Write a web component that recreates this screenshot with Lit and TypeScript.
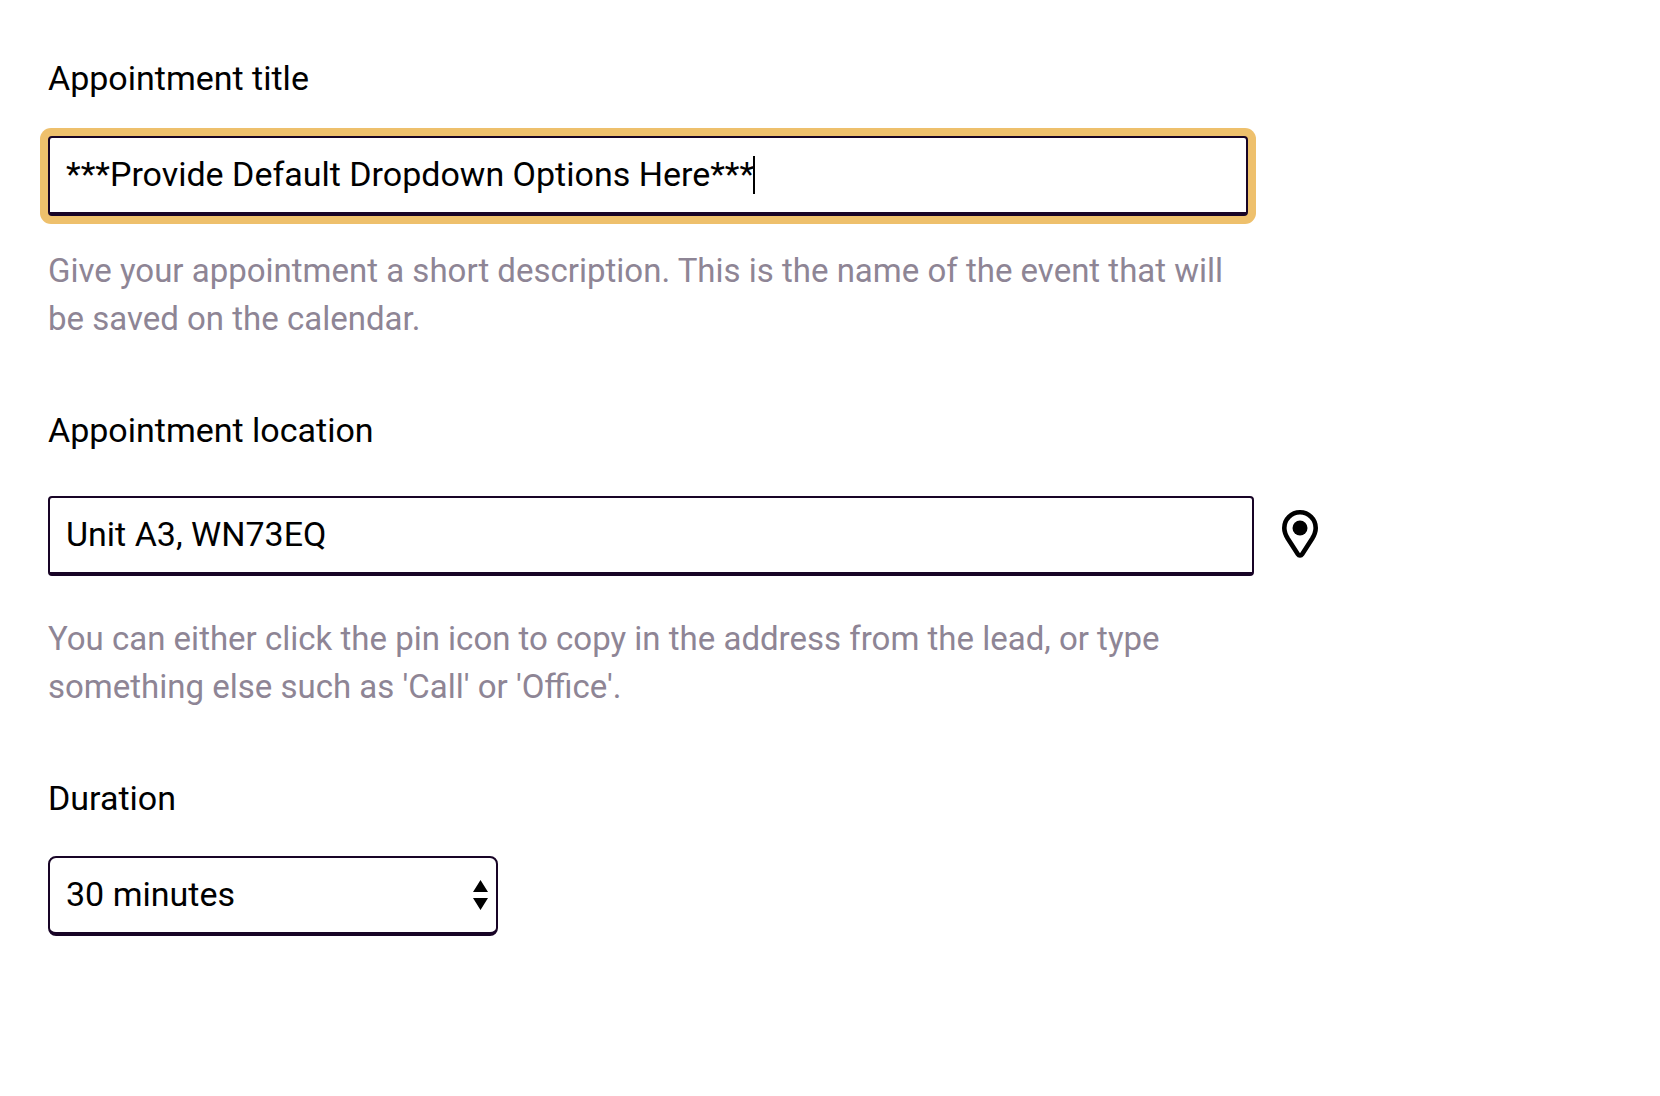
import { LitElement, html, css } from "lit";
import { customElement, state } from "lit/decorators.js";

@customElement("app-root")
export class AppRoot extends LitElement {
  static styles = css`
    :host {
      display: block;
      min-height: 100vh;
      box-sizing: border-box;
      padding: 54px 48px 48px;
      background: #fff;
      color: #000;
      font-family: Roboto, "Liberation Sans", sans-serif;
      font-size: 34px;
      line-height: 48px;
    }
    .form {
      display: flex;
      flex-direction: column;
      gap: 63px;
    }
    .field {
      display: flex;
      flex-direction: column;
      max-width: 1200px;
    }
    .label {
      margin-bottom: 34px;
    }
    .control {
      position: relative;
      display: flex;
    }
    .with-action {
      display: grid;
      grid-template-columns: minmax(0, 1fr) auto;
      align-items: center;
      column-gap: 24px;
      padding: 8px 0;
      margin-right: -74px;
    }
    .box {
      box-sizing: border-box;
      width: 100%;
      min-width: 0;
      margin: 0;
      padding: 12px 16px 14px;
      border: 2px solid #180426;
      border-bottom-width: 4px;
      border-radius: 4px;
      outline: none;
      background: #fff;
      color: #000;
      font: inherit;
    }
    .focused {
      box-shadow: 0 0 0 8px #eec06c;
    }
    .caret {
      position: absolute;
      top: 20px;
      left: 705px;
      width: 2px;
      height: 38px;
      background: #000;
    }
    .help {
      margin: 31px 0 0;
      color: #8e8595;
      font-size: 33px;
    }
    .pin {
      display: flex;
      padding: 0 4px 4px;
      border: 0;
      background: none;
      color: #000;
      cursor: pointer;
    }
    .pin svg {
      width: 36px;
      height: 48px;
    }
    .duration {
      width: 450px;
      max-width: 100%;
    }
    .select {
      appearance: none;
      padding-right: 40px;
      border-radius: 8px;
    }
    .arrows {
      position: absolute;
      top: 24px;
      right: 10px;
      width: 15px;
      height: 30px;
      pointer-events: none;
    }
  `;

  @state() private heading = "***Provide Default Dropdown Options Here***";
  @state() private place = "Unit A3, WN73EQ";

  render() {
    return html`
      <form class="form">
        <div class="field">
          <label class="label" for="title">Appointment title</label>
          <div class="control">
            <input class="box focused" id="title" type="text" aria-describedby="title-help" .value=${this.heading} />
            <span class="caret"></span>
          </div>
          <p class="help" id="title-help">
            Give your appointment a short description. This is the name of the event that will be saved on the calendar.
          </p>
        </div>
        <div class="field">
          <label class="label" id="place-label" for="place">Appointment location</label>
          <div class="with-action">
            <input class="box" id="place" type="text" aria-describedby="place-help" .value=${this.place} />
            <button class="pin" type="button" aria-labelledby="place-label">
              <svg viewBox="0 0 36 48" aria-hidden="true">
                <path
                  d="M18 2.300C9.300 2.300 2.300 9.300 2.300 18c0 3.800 1.400 7.200 3.600 10.800L15.900 44.300c1 1.600 3.200 1.600 4.200 0L30.100 28.800C32.300 25.200 33.700 21.800 33.700 18 33.700 9.300 26.700 2.300 18 2.300Z"
                  fill="none"
                  stroke="currentColor"
                  stroke-width="4.600"
                />
                <circle cx="18" cy="18" r="7.500" fill="currentColor" />
              </svg>
            </button>
          </div>
          <p class="help" id="place-help">
            You can either click the pin icon to copy in the address from the lead, or type something else such as 'Call' or
            'Office'.
          </p>
        </div>
        <div class="field">
          <label class="label" for="duration">Duration</label>
          <div class="control duration">
            <select class="box select" id="duration">
              <option>30 minutes</option>
            </select>
            <svg class="arrows" viewBox="0 0 15 30" aria-hidden="true">
              <path d="M7.500 0 15 12H0ZM0 18h15L7.500 30Z" />
            </svg>
          </div>
        </div>
      </form>
    `;
  }
}
